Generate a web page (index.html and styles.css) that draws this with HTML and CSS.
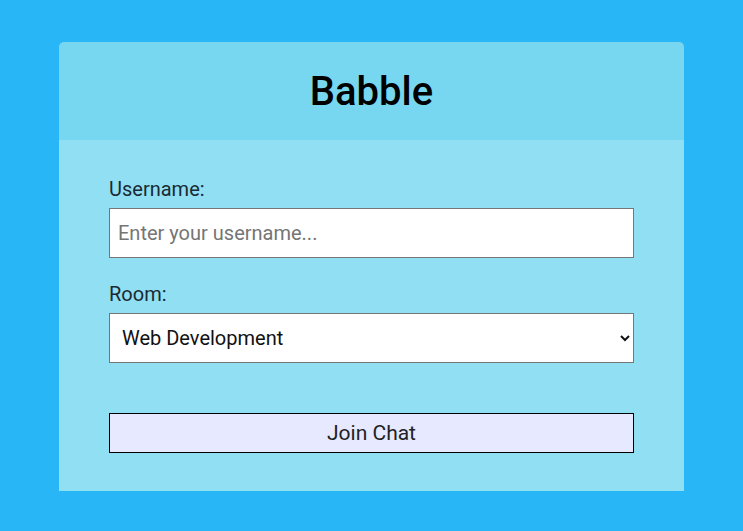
FILE: index.html
```html
<!DOCTYPE html>
<html lang="en">
<head>
<meta charset="utf-8">
<title>Babble</title>
<link rel="stylesheet" href="styles.css">
</head>
<body>
<div class="card">
  <header class="card-header">
    <h1 class="title">Babble</h1>
  </header>
  <main class="card-main">
    <form class="join-form">
      <div class="field">
        <label class="field-label" for="username">Username:</label>
        <input class="field-input" type="text" id="username" placeholder="Enter your username...">
      </div>
      <div class="field">
        <label class="field-label" for="room">Room:</label>
        <select class="field-input field-select" id="room">
          <option>Web Development</option>
          <option>JavaScript</option>
          <option>Python</option>
        </select>
      </div>
      <button class="join-btn" type="button">Join Chat</button>
    </form>
  </main>
</div>
</body>
</html>
```

FILE: styles.css
```css
* { box-sizing: border-box; }
html, body { margin: 0; }
body {
  background: #29b6f6;
  font-family: Roboto, "Noto Sans", sans-serif;
  color: #111;
}
.card {
  width: 625px;
  margin: 42px auto 0;
  border-radius: 5px 5px 0 0;
  overflow: hidden;
}
.card-header {
  background: #77d7f1;
  height: 98px;
  display: flex;
  align-items: center;
  justify-content: center;
}
.title {
  margin: 0;
  font-size: 40px;
  font-weight: 500;
  color: #000;
}
.card-main {
  background: #91dff3;
  padding: 38px 50px 38px;
}
.field {
  margin-bottom: 25px;
}
.field-label {
  display: block;
  font-size: 20px;
  line-height: 23px;
  margin-bottom: 7px;
  color: #1a2a33;
}
.field-input {
  display: block;
  width: 100%;
  height: 50px;
  font-family: Roboto, sans-serif;
  font-size: 20px;
  padding: 0 8px;
  border: 1px solid #767676;
  background: #fff;
  color: #111;
  border-radius: 0;
}
.field-input::placeholder { color: #757575; }
.field-select { padding: 0 8px; }
.join-btn {
  display: block;
  width: 100%;
  height: 40px;
  margin-top: 50px;
  font-family: Roboto, sans-serif;
  font-size: 21px;
  background: #e6e9ff;
  border: 1px solid #000;
  color: #222;
  border-radius: 0;
}
```
